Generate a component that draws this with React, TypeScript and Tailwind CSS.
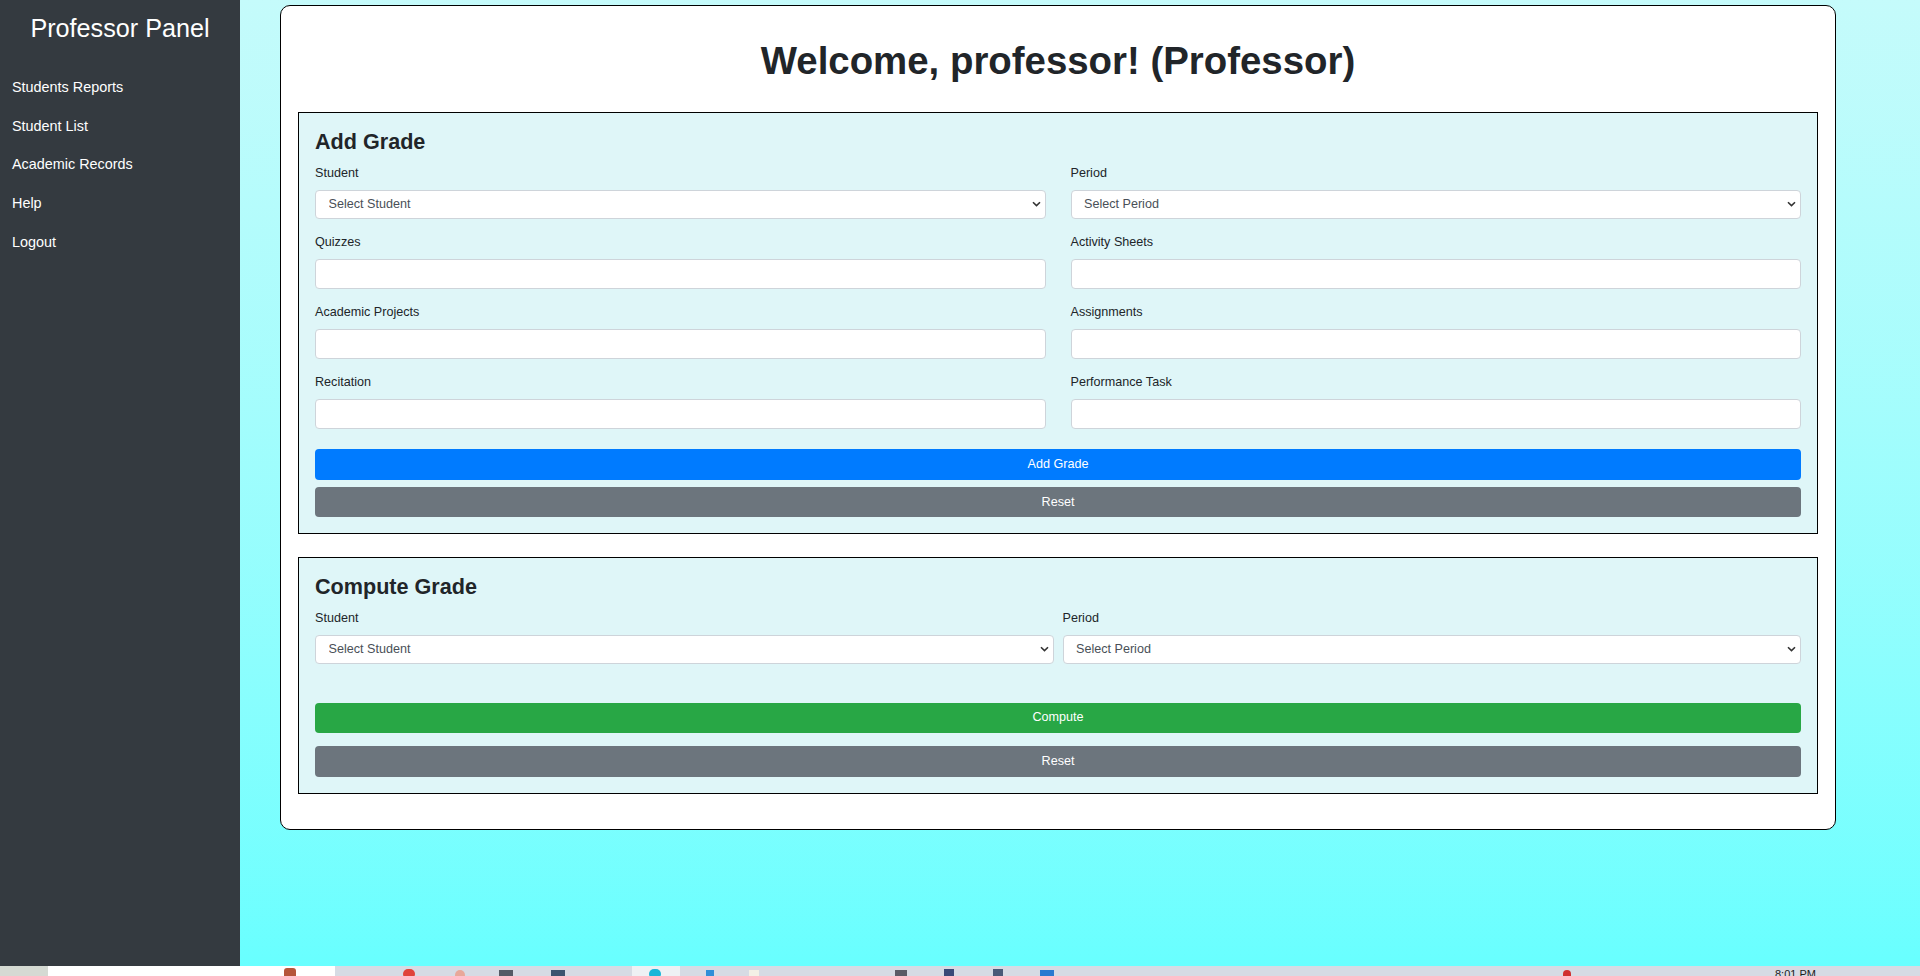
import React from 'react';

const navLinks = ['Students Reports', 'Student List', 'Academic Records', 'Help', 'Logout'];

function Chevron() {
  return (
    <svg
      className="pointer-events-none absolute right-[5px] top-1/2 -translate-y-1/2"
      width="9"
      height="6"
      viewBox="0 0 9 6"
      fill="none"
    >
      <path d="M1 1.2 L4.5 4.6 L8 1.2" stroke="#333" strokeWidth="1.6" />
    </svg>
  );
}

function SelectField({ label, placeholder }: { label: string; placeholder: string }) {
  return (
    <div className="flex flex-col">
      <label className="text-[12.6px] leading-[19px] mb-[7px] text-[#212529]">{label}</label>
      <div className="relative">
        <select
          defaultValue=""
          className="appearance-none w-full h-[29px] bg-white border border-[#ced4da] rounded-[4px] pl-[12.5px] pr-6 text-[12.6px] text-[#495057] outline-none"
        >
          <option value="">{placeholder}</option>
        </select>
        <Chevron />
      </div>
    </div>
  );
}

function InputField({ label }: { label: string }) {
  return (
    <div className="flex flex-col">
      <label className="text-[12.6px] leading-[19px] mb-[7px] text-[#212529]">{label}</label>
      <input
        type="text"
        className="w-full h-[30px] bg-white border border-[#ced4da] rounded-[4px] px-[12px] text-[12.6px] text-[#495057] outline-none"
      />
    </div>
  );
}

function Btn({ color, children, h }: { color: string; children: React.ReactNode; h: string }) {
  return (
    <button className={`w-full ${h} ${color} rounded-[4px] text-white text-[12.6px] flex items-center justify-center`}>
      {children}
    </button>
  );
}

export default function App() {
  return (
    <div className="w-full h-[976px] flex flex-col overflow-hidden font-['Liberation_Sans',Arial,sans-serif]">
      <div className="flex h-[966px]">
        {/* sidebar */}
        <aside className="w-[240px] shrink-0 bg-[#343a40] text-white">
          <h3 className="text-center text-[25.2px] leading-[30px] pt-[13px] mb-[25px]">Professor Panel</h3>
          <nav className="flex flex-col">
            {navLinks.map((l) => (
              <a key={l} href="#" className="block pl-[12px] text-[14.4px] leading-[21.6px] py-[8.65px] text-white">
                {l}
              </a>
            ))}
          </nav>
        </aside>

        {/* main */}
        <main className="flex-1 bg-linear-to-b from-[#c5fbfb] to-[#68ffff] pl-[40px] pt-[5px]">
          <div className="w-[1556px] bg-white border border-black rounded-[10px] px-[17px] pt-[32px] pb-[35px]">
            <h1 className="text-center font-bold text-[38.4px] leading-[46px] text-[#212529] mb-[28px]">
              Welcome, professor! (Professor)
            </h1>

            <section className="border border-black bg-[#dff6f8] px-[16px] pt-[16px] pb-[16px]">
              <h4 className="font-bold text-[21.6px] leading-[26px] mb-[8.5px] text-[#212529]">Add Grade</h4>
              <div className="grid grid-cols-2 gap-x-[25px] gap-y-[14px]">
                <SelectField label="Student" placeholder="Select Student" />
                <SelectField label="Period" placeholder="Select Period" />
                <InputField label="Quizzes" />
                <InputField label="Activity Sheets" />
                <InputField label="Academic Projects" />
                <InputField label="Assignments" />
                <InputField label="Recitation" />
                <InputField label="Performance Task" />
              </div>
              <div className="mt-[20.5px] flex flex-col gap-[7px]">
                <Btn color="bg-[#007bff]" h="h-[31px]">Add Grade</Btn>
                <Btn color="bg-[#6c757d]" h="h-[30px]">Reset</Btn>
              </div>
            </section>

            <section className="mt-[23px] border border-black bg-[#dff6f8] px-[16px] pt-[16px] pb-[16px]">
              <h4 className="font-bold text-[21.6px] leading-[26px] mb-[8.5px] text-[#212529]">Compute Grade</h4>
              <div className="grid grid-cols-2 gap-x-[9px]">
                <SelectField label="Student" placeholder="Select Student" />
                <SelectField label="Period" placeholder="Select Period" />
              </div>
              <div className="mt-[39px] flex flex-col gap-[13.5px]">
                <Btn color="bg-[#28a745]" h="h-[30px]">Compute</Btn>
                <Btn color="bg-[#6c757d]" h="h-[30.5px]">Reset</Btn>
              </div>
            </section>
          </div>
        </main>
      </div>

      {/* taskbar strip at the bottom */}
      <div className="h-[10px] flex bg-[#d6dbe4] relative overflow-hidden">
        <div className="w-[48px] bg-[#d5dad3]" />
        <div className="w-[287px] bg-white relative">
          <span className="absolute left-[236px] top-[2px] w-[12px] h-[10px] bg-[#b5553a] rounded-t-[3px]" />
        </div>
        <span className="absolute left-[403px] top-[3px] w-[12px] h-[10px] rounded-full bg-[#e0443a]" />
        <span className="absolute left-[455px] top-[4px] w-[10px] h-[10px] rounded-full bg-[#e8a89a]" />
        <span className="absolute left-[499px] top-[4px] w-[14px] h-[10px] bg-[#555b66]" />
        <span className="absolute left-[551px] top-[4px] w-[14px] h-[10px] bg-[#3c5570]" />
        <span className="absolute left-[632px] top-0 w-[48px] h-[10px] bg-[#eef1f4]" />
        <span className="absolute left-[649px] top-[3px] w-[12px] h-[10px] rounded-full bg-[#19b6d8]" />
        <span className="absolute left-[706px] top-[4px] w-[8px] h-[10px] bg-[#2f8fd8]" />
        <span className="absolute left-[749px] top-[4px] w-[10px] h-[10px] bg-[#f3f0e6]" />
        <span className="absolute left-[895px] top-[4px] w-[12px] h-[10px] bg-[#5b5b66]" />
        <span className="absolute left-[944px] top-[3px] w-[10px] h-[10px] bg-[#3a4a78]" />
        <span className="absolute left-[993px] top-[3px] w-[10px] h-[10px] bg-[#4a5a78]" />
        <span className="absolute left-[1040px] top-[4px] w-[14px] h-[10px] bg-[#2a7ad0]" />
        <span className="absolute left-[1563px] top-[4px] w-[8px] h-[10px] rounded-full bg-[#d03030]" />
        <span className="absolute left-[1775px] top-[2px] text-[11px] leading-[12px] text-[#222]">8:01 PM</span>
      </div>
    </div>
  );
}
